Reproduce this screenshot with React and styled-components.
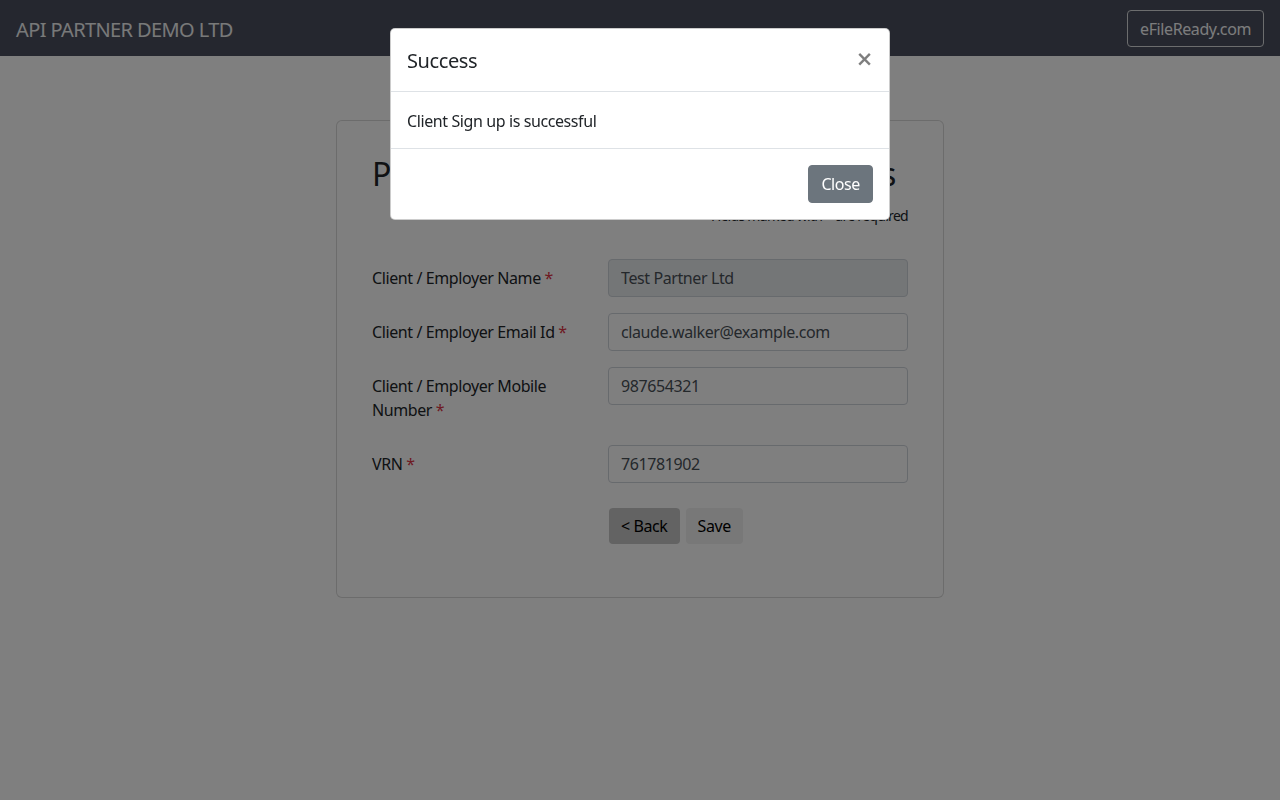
import React from "react"
import styled, { createGlobalStyle } from "styled-components"

const GlobalStyle = createGlobalStyle`
  html, body {
    margin: 0;
    padding: 0;
    background: #ffffff;
    font-family: "Noto Sans", "Open Sans", Arial, sans-serif;
    letter-spacing: -0.025em;
    color: #212529;
    font-size: 16px;
    line-height: 1.5;
  }
  * { box-sizing: border-box; }
  button, input { letter-spacing: inherit; }
`

const Page = styled.div`
  min-height: 800px;
  background: #ffffff;
`

const Navbar = styled.nav`
  height: 56px;
  background: #4a4e5e;
  display: flex;
  align-items: center;
  justify-content: space-between;
  padding: 0 16px;
`

const Brand = styled.span`
  font-size: 20px;
  color: #f1f2f3;
  padding-top: 3px;
  letter-spacing: -0.03em;
`

const OutlineButton = styled.button`
  font-family: inherit;
  font-size: 16px;
  line-height: 24px;
  padding: 6px 12px 5px;
  margin-top: 1px;
  background: transparent;
  color: #f8f9fa;
  border: 1px solid #d8dadc;
  border-radius: 4px;
`

const Main = styled.main`
  display: flex;
  justify-content: center;
  padding-top: 64px;
`

const Card = styled.section`
  width: 608px;
  border: 1px solid rgba(0, 0, 0, 0.15);
  border-radius: 6px;
  padding: 34px 35px 53px;
  background: #fff;
`

const Title = styled.h2`
  margin: 0 0 12px;
  font-size: 32px;
  font-weight: 400;
  line-height: 1.2;
  letter-spacing: 1.1px;
  white-space: nowrap;
`

const Note = styled.p`
  margin: 0 0 33px;
  text-align: right;
  font-size: 14px;
  line-height: 21px;
  letter-spacing: -0.05em;
`

const FormRow = styled.div`
  display: grid;
  grid-template-columns: 206px 300px;
  column-gap: 30px;
  margin-bottom: 16px;
`

const Label = styled.label`
  padding: 7px 0;
  font-size: 16px;
  line-height: 24px;
`

const Req = styled.span`
  color: #dc3545;
`

const Input = styled.input`
  font-family: inherit;
  height: 38px;
  width: 300px;
  font-size: 16px;
  padding: 6px 12px;
  color: #495057;
  background: ${p => (p.readOnly ? "#e9ecef" : "#fff")};
  border: 1px solid #ced4da;
  border-radius: 4px;
`

const Actions = styled.div`
  display: flex;
  gap: 6px;
  margin-left: 237px;
  padding-top: 9px;
`

const PlainButton = styled.button`
  font-family: inherit;
  font-size: 16px;
  line-height: 24px;
  padding: 6px 12px;
  border: none;
  border-radius: 4px;
  color: #000;
  background: ${p => (p.dark ? "#c6c6c6" : "#f0f0f0")};
`

const Backdrop = styled.div`
  position: fixed;
  inset: 0;
  background: rgba(0, 0, 0, 0.5);
`

const Dialog = styled.div`
  position: fixed;
  top: 28px;
  left: 390px;
  width: 500px;
  background: #fff;
  border: 1px solid rgba(0, 0, 0, 0.2);
  border-radius: 5px;
  overflow: hidden;
`

const DialogHeader = styled.div`
  display: flex;
  justify-content: space-between;
  align-items: center;
  height: 63px;
  padding: 2px 16px 0;
  border-bottom: 1px solid #dee2e6;
`

const DialogTitle = styled.h5`
  margin: 0;
  font-size: 20px;
  font-weight: 400;
  line-height: 30px;
`

const CloseX = styled.button`
  border: none;
  background: transparent;
  font-family: "DejaVu Sans", sans-serif;
  font-size: 21px;
  font-weight: 700;
  line-height: 1;
  color: #000;
  opacity: 0.5;
  padding: 0 0 3px 0;
`

const DialogBody = styled.div`
  padding: 17px 16px 15px;
  font-size: 16px;
  line-height: 24px;
`

const DialogFooter = styled.div`
  display: flex;
  justify-content: flex-end;
  padding: 16px;
  border-top: 1px solid #dee2e6;
`

const SecondaryButton = styled.button`
  font-family: inherit;
  font-size: 16px;
  line-height: 24px;
  padding: 6px 12px;
  border: 1px solid #6c757d;
  border-radius: 4px;
  background: #6c757d;
  color: #fff;
`

const fields = [
  { label: "Client / Employer Name", value: "Test Partner Ltd", readOnly: true },
  { label: "Client / Employer Email Id", value: "claude.walker@example.com" },
  { label: "Client / Employer Mobile Number", value: "987654321" },
  { label: "VRN", value: "761781902" },
]

export default function App() {
  return (
    <Page>
      <GlobalStyle />
      <Navbar>
        <Brand>API PARTNER DEMO LTD</Brand>
        <OutlineButton>eFileReady.com</OutlineButton>
      </Navbar>
      <Main>
        <Card>
          <Title>Partner Client / Employer Details</Title>
          <Note>Fields marked with <Req>*</Req> are required</Note>
          {fields.map(f => (
            <FormRow key={f.label}>
              <Label>
                {f.label} <Req>*</Req>
              </Label>
              <Input defaultValue={f.value} readOnly={f.readOnly} />
            </FormRow>
          ))}
          <Actions>
            <PlainButton dark>&lt; Back</PlainButton>
            <PlainButton>Save</PlainButton>
          </Actions>
        </Card>
      </Main>

      <Backdrop />
      <Dialog>
        <DialogHeader>
          <DialogTitle>Success</DialogTitle>
          <CloseX>×</CloseX>
        </DialogHeader>
        <DialogBody>Client Sign up is successful</DialogBody>
        <DialogFooter>
          <SecondaryButton>Close</SecondaryButton>
        </DialogFooter>
      </Dialog>
    </Page>
  )
}
